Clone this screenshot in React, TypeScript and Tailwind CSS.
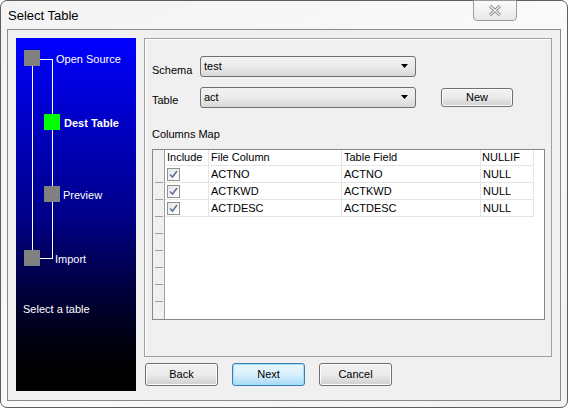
import React from "react";

const font = { fontFamily: '"Liberation Sans", Arial, sans-serif' };

function Combo({ value }: { value: string }) {
  return (
    <div className="flex h-[21px] w-[216px] items-center justify-between rounded-[3px] border border-[#707070] bg-gradient-to-b from-[#f2f2f2] via-[#ebebeb] to-[#d8d8d8] pl-[3px] pr-[6px] text-[11px] text-black">
      <span>{value}</span>
      <svg width="8" height="5" viewBox="0 0 8 5">
        <path d="M0 0 H7 L3.5 4 Z" fill="#000" />
      </svg>
    </div>
  );
}

function Btn({ label, def }: { label: string; def?: boolean }) {
  return (
    <div
      className={
        "flex h-[23px] w-[73px] items-center justify-center rounded-[3px] border text-[11px] text-black " +
        (def
          ? "border-[#3c7fb1] bg-gradient-to-b from-[#eaf6fd] via-[#d9f0fc] to-[#a7d9f5] shadow-[inset_0_0_0_1px_#9fe0ff]"
          : "border-[#707070] bg-gradient-to-b from-[#f2f2f2] via-[#ebebeb] to-[#cfcfcf] shadow-[inset_0_0_0_1px_#fcfcfc]")
      }
    >
      {label}
    </div>
  );
}

function Check() {
  return (
    <div className="flex h-[13px] w-[13px] items-center justify-center border border-[#8e8f8f] bg-gradient-to-br from-[#e6e6e6] to-[#ffffff]">
      <svg width="9" height="9" viewBox="0 0 9 9">
        <path d="M1 4.5 L3.5 7 L8 1" stroke="#5a6e9c" strokeWidth="1.5" fill="none" />
      </svg>
    </div>
  );
}

const rows = [
  ["ACTNO", "ACTNO", "NULL"],
  ["ACTKWD", "ACTKWD", "NULL"],
  ["ACTDESC", "ACTDESC", "NULL"],
];

export default function App() {
  return (
    <div className="h-[408px] w-[568px] bg-white" style={font}>
      <div className="relative flex h-[408px] w-[568px] flex-col rounded-[7px] border border-[#5e5e5e] bg-gradient-to-br from-[#f3f3f3] via-[#fafafa] to-[#f1f1f1]">
        <div className="flex h-[28px] shrink-0 items-center pl-[7px] pt-[2px] text-[13px] text-black">
          Select Table
        </div>
        <div className="absolute left-[472px] top-[-1px] flex h-[21px] w-[44px] items-center justify-center rounded-b-[4px] border border-[#9a9a9a] bg-gradient-to-b from-[#fbfbfb] to-[#e8e8e8]">
          <svg width="14" height="11" viewBox="0 0 14 11">
            <path d="M2 1 L12 10 M12 1 L2 10" stroke="#7a7a7a" strokeWidth="3" />
            <path d="M2 1 L12 10 M12 1 L2 10" stroke="#f4f4f4" strokeWidth="1.3" />
          </svg>
        </div>
        <div className="mx-[6px] mb-[6px] flex h-[372px] shrink-0 gap-[8px] border border-[#8a8a8a] bg-[#f0f0f0] px-[8px] pt-[8px]">
          <div className="relative h-[353px] w-[120px] bg-gradient-to-b from-[#0000ff] via-[#00008a] to-[#000000] text-[11px] text-white">
            <div className="absolute left-[8px] top-[12px] h-[16px] w-[16px] bg-[#808080]" />
            <div className="absolute left-[24px] top-[21px] h-px w-[12px] bg-white" />
            <div className="absolute left-[16px] top-[28px] h-[184px] w-px bg-white" />
            <div className="absolute left-[36px] top-[21px] h-[200px] w-px bg-white" />
            <div className="absolute left-[40px] top-[13px] leading-[16px]">Open Source</div>
            <div className="absolute left-[28px] top-[76px] h-[16px] w-[16px] bg-[#00ff00]" />
            <div className="absolute left-[48px] top-[77px] font-bold leading-[16px]">Dest Table</div>
            <div className="absolute left-[28px] top-[148px] h-[16px] w-[16px] bg-[#808080]" />
            <div className="absolute left-[47px] top-[149px] leading-[16px]">Preview</div>
            <div className="absolute left-[8px] top-[212px] h-[16px] w-[16px] bg-[#808080]" />
            <div className="absolute left-[24px] top-[220px] h-px w-[12px] bg-white" />
            <div className="absolute left-[39px] top-[213px] leading-[16px]">Import</div>
            <div className="absolute left-[7px] top-[263px] leading-[16px]">Select a table</div>
          </div>
          <div className="flex flex-col">
            <div className="flex h-[319px] w-[408px] flex-col border border-[#a0a0a0] pl-[7px] shadow-[inset_1px_1px_0_#ffffff]">
              <div className="mt-[16px] flex items-center">
                <div className="w-[48px] pt-[8px] text-[11px] leading-[14px]">Schema</div>
                <Combo value="test" />
              </div>
              <div className="mt-[10px] flex items-center">
                <div className="w-[48px] pt-[4px] text-[11px] leading-[14px]">Table</div>
                <Combo value="act" />
                <div className="ml-[25px] flex h-[19px] w-[72px] items-center justify-center rounded-[3px] border border-[#707070] bg-gradient-to-b from-[#f2f2f2] via-[#ebebeb] to-[#cfcfcf] text-[11px] shadow-[inset_0_0_0_1px_#fcfcfc]">
                  New
                </div>
              </div>
              <div className="mt-[19px] text-[11px] leading-[14px]">Columns Map</div>
              <div className="mt-[8px] flex h-[171px] w-[393px] border border-[#828790] bg-white text-[11px]">
                <div className="flex w-[12px] flex-col border-r border-[#a0a0a0] bg-[#f0f0f0]">
                  <div className="h-[16px]" />
                  {Array.from({ length: 8 }).map((_, i) => (
                    <div key={i} className="flex h-[17px] items-end pl-[2px]">
                      <div className="h-px w-[8px] bg-[#a0a0a0]" />
                    </div>
                  ))}
                </div>
                <div className="flex flex-col">
                  <div className="flex h-[16px] border-b border-[#e5e5e5] leading-[15px]">
                    <div className="w-[44px] border-r border-[#e5e5e5] pl-[2px]">Include</div>
                    <div className="w-[133px] border-r border-[#e5e5e5] pl-[2px]">File Column</div>
                    <div className="w-[139px] border-r border-[#e5e5e5] pl-[2px]">Table Field</div>
                    <div className="w-[53px] border-r border-[#e5e5e5] pl-[1px]">NULLIF</div>
                  </div>
                  {rows.map((r, i) => (
                    <div key={i} className="flex h-[17px] border-b border-[#e5e5e5] leading-[16px]">
                      <div className="flex w-[44px] items-center border-r border-[#e5e5e5] pl-[2px]">
                        <Check />
                      </div>
                      <div className="w-[133px] border-r border-[#e5e5e5] pl-[2px]">{r[0]}</div>
                      <div className="w-[139px] border-r border-[#e5e5e5] pl-[2px]">{r[1]}</div>
                      <div className="w-[53px] border-r border-[#e5e5e5] pl-[2px]">{r[2]}</div>
                    </div>
                  ))}
                </div>
              </div>
            </div>
            <div className="mt-[6px] flex gap-[14px] pl-[1px]">
              <Btn label="Back" />
              <Btn label="Next" def />
              <Btn label="Cancel" />
            </div>
          </div>
        </div>
      </div>
    </div>
  );
}
